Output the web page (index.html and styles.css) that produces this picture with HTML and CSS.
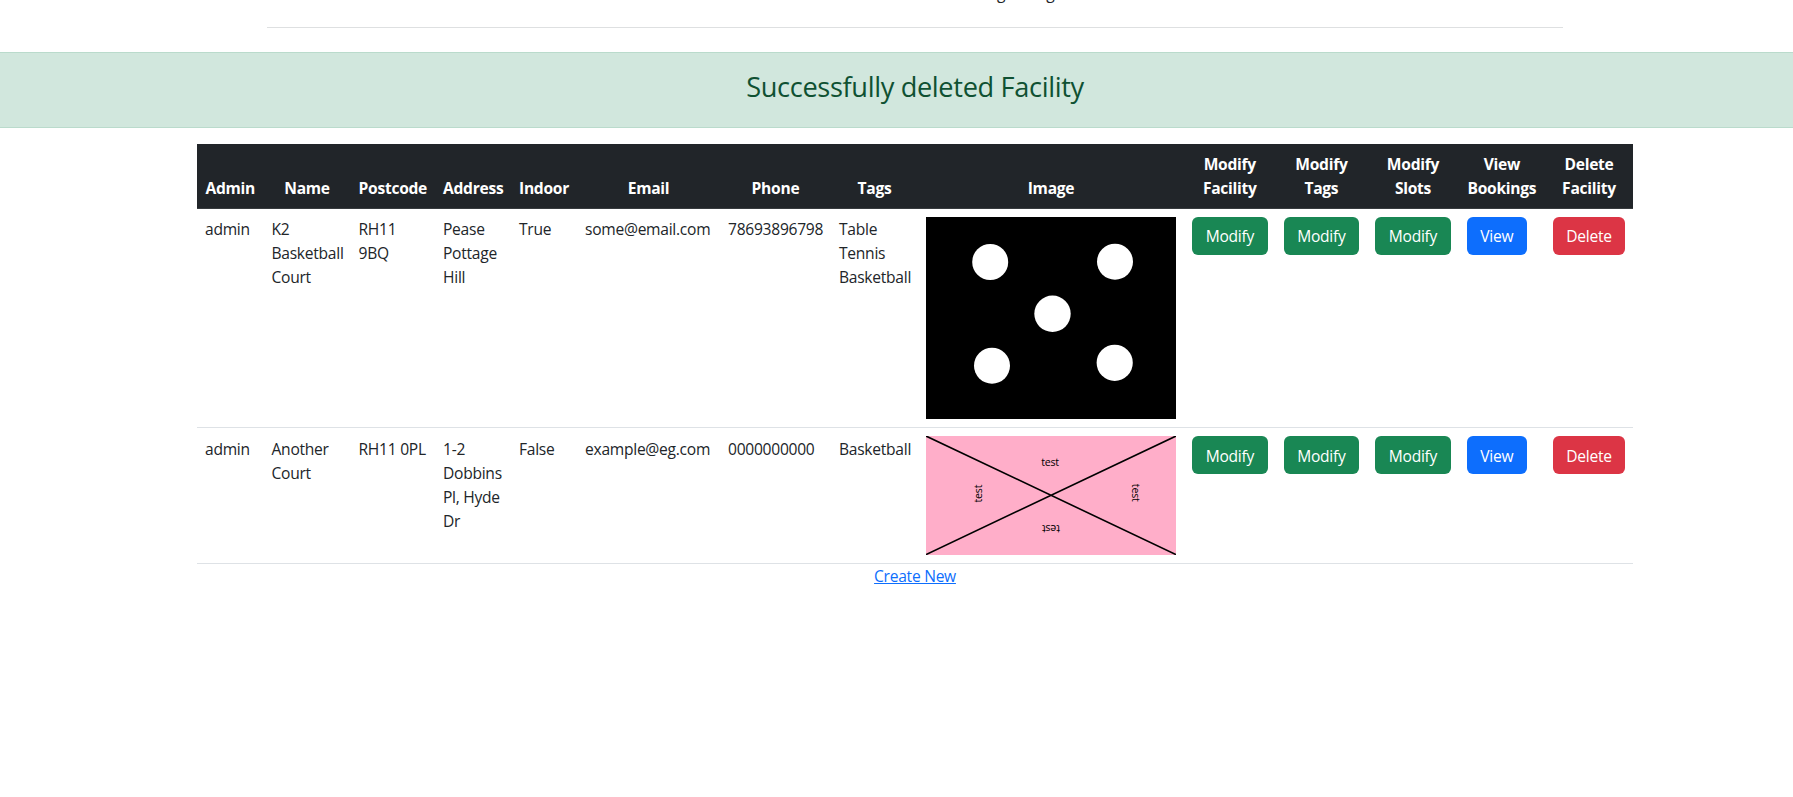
FILE: index.html
```html
<!DOCTYPE html>
<html lang="en">
<head>
<meta charset="utf-8">
<title>Facilities</title>
<link rel="stylesheet" href="styles.css">
</head>
<body>
<div class="page">
  <header class="top"><p class="tagline"><span>g</span><span>g</span></p></header>
  <div class="alert"><h3>Successfully deleted Facility</h3></div>
  <table class="table">
    <colgroup>
      <col class="c-admin"><col class="c-name"><col class="c-post"><col class="c-addr"><col class="c-indoor"><col class="c-email"><col class="c-phone"><col class="c-tags"><col class="c-image"><col class="c-mod"><col class="c-mod"><col class="c-mod"><col class="c-view"><col class="c-del">
    </colgroup>
    <thead>
      <tr>
        <th>Admin</th><th>Name</th><th>Postcode</th><th>Address</th><th>Indoor</th><th>Email</th><th>Phone</th><th>Tags</th><th>Image</th>
        <th>Modify<br>Facility</th><th>Modify<br>Tags</th><th>Modify<br>Slots</th><th>View<br>Bookings</th><th>Delete<br>Facility</th>
      </tr>
    </thead>
    <tbody>
      <tr>
        <td>admin</td><td>K2<br>Basketball<br>Court</td><td>RH11<br>9BQ</td><td>Pease<br>Pottage<br>Hill</td><td>True</td><td>some@email.com</td><td>78693896798</td><td>Table<br>Tennis<br>Basketball</td>
        <td class="media"><svg class="pic" width="250" height="202" viewBox="0 0 250 202"><rect width="250" height="202" fill="#000"/><g fill="#fff"><circle cx="64.2" cy="45" r="18"/><circle cx="189" cy="44.7" r="18"/><circle cx="126.5" cy="96.8" r="18.2"/><circle cx="66" cy="148.7" r="18"/><circle cx="188.7" cy="145.8" r="18.1"/></g></svg></td>
        <td><a class="btn modify">Modify</a></td><td><a class="btn modify">Modify</a></td><td><a class="btn modify">Modify</a></td><td><a class="btn view">View</a></td><td><a class="btn delete">Delete</a></td>
      </tr>
      <tr class="second">
        <td>admin</td><td>Another<br>Court</td><td>RH11 0PL</td><td>1-2<br>Dobbins<br>Pl, Hyde<br>Dr</td><td>False</td><td>example@eg.com</td><td>0000000000</td><td>Basketball</td>
        <td class="media"><svg class="pic" width="250" height="119" viewBox="0 0 250 119"><rect width="250" height="119" fill="#ffaec9"/><path d="M0 0L250 118.6M0 118.6L250 0" stroke="#000" stroke-width="1.6"/><g class="pic-text"><text transform="translate(124 30)">test</text><text transform="translate(206 56.7) rotate(90)">test</text><text transform="translate(56 57.6) rotate(-90)">test</text><text transform="translate(125 89.4) rotate(180)">test</text></g></svg></td>
        <td class="media"><a class="btn modify">Modify</a></td><td class="media"><a class="btn modify">Modify</a></td><td class="media"><a class="btn modify">Modify</a></td><td class="media"><a class="btn view">View</a></td><td class="media"><a class="btn delete">Delete</a></td>
      </tr>
    </tbody>
  </table>
  <p class="create"><a href="#">Create New</a></p>
</div>
</body>
</html>
```
FILE: styles.css
```css
* { box-sizing: border-box; }
html { overflow: hidden; }
body {
  margin: 0;
  overflow: hidden;
  background: #fff;
  color: #212529;
  font-family: "Open Sans", "Noto Sans", sans-serif;
  font-size: 15.6px;
  letter-spacing: -0.27px;
  line-height: 24px;
}
.page { width: 1830px; height: 797px; }
.top {
  width: 1296px;
  height: 28px;
  margin: 0 auto 24px;
  border-bottom: 1px solid #dee0e1;
  overflow: hidden;
}
.tagline {
  display: flex;
  gap: 41px;
  margin: -19px 0 0 730px;
}
.alert {
  height: 76px;
  padding: 17px 16px 15px;
  border: 1px solid #badbcc;
  border-width: 1px 0;
  background: #d1e7dd;
  color: #0f5132;
  text-align: center;
}
.alert h3 {
  margin: 0;
  font-size: 27.2px;
  font-weight: 400;
  letter-spacing: -0.35px;
  line-height: 33.6px;
}
.table {
  width: 1436px;
  margin: 16px auto 0;
  table-layout: fixed;
  border-collapse: separate;
  border-spacing: 0;
}
.c-admin { width: 66.5px; }
.c-name { width: 87px; }
.c-post { width: 84.5px; }
.c-addr { width: 76px; }
.c-indoor { width: 66px; }
.c-email { width: 143px; }
.c-phone { width: 111px; }
.c-tags { width: 87px; }
.c-image { width: 266px; }
.c-mod { width: 91.6px; }
.c-view { width: 86.2px; }
.c-del { width: 88px; }
th, td {
  padding: 8px;
  border-bottom: 1px solid #dee2e6;
  white-space: nowrap;
}
th {
  background: #212529;
  border-bottom-color: #373b3e;
  color: #fff;
  font-weight: 700;
  text-align: center;
  vertical-align: bottom;
}
td { vertical-align: top; }
.second td { padding-top: 9px; }
.second .media { padding-top: 8px; }
.pic { display: block; }
.pic-text {
  font-size: 10.6px;
  letter-spacing: -0.2px;
  text-anchor: middle;
}
.btn {
  display: block;
  height: 38px;
  padding: 7px 0;
  border-radius: 6px;
  color: #fff;
  text-align: center;
}
.second .btn { padding-top: 8px; }
.modify { width: 75.6px; background: #198754; }
.view { width: 60px; background: #0d6efd; }
.delete { width: 72px; background: #dc3545; }
.create { margin: 0; text-align: center; }
.create a {
  color: #0d6efd;
  text-decoration: underline;
}
```
